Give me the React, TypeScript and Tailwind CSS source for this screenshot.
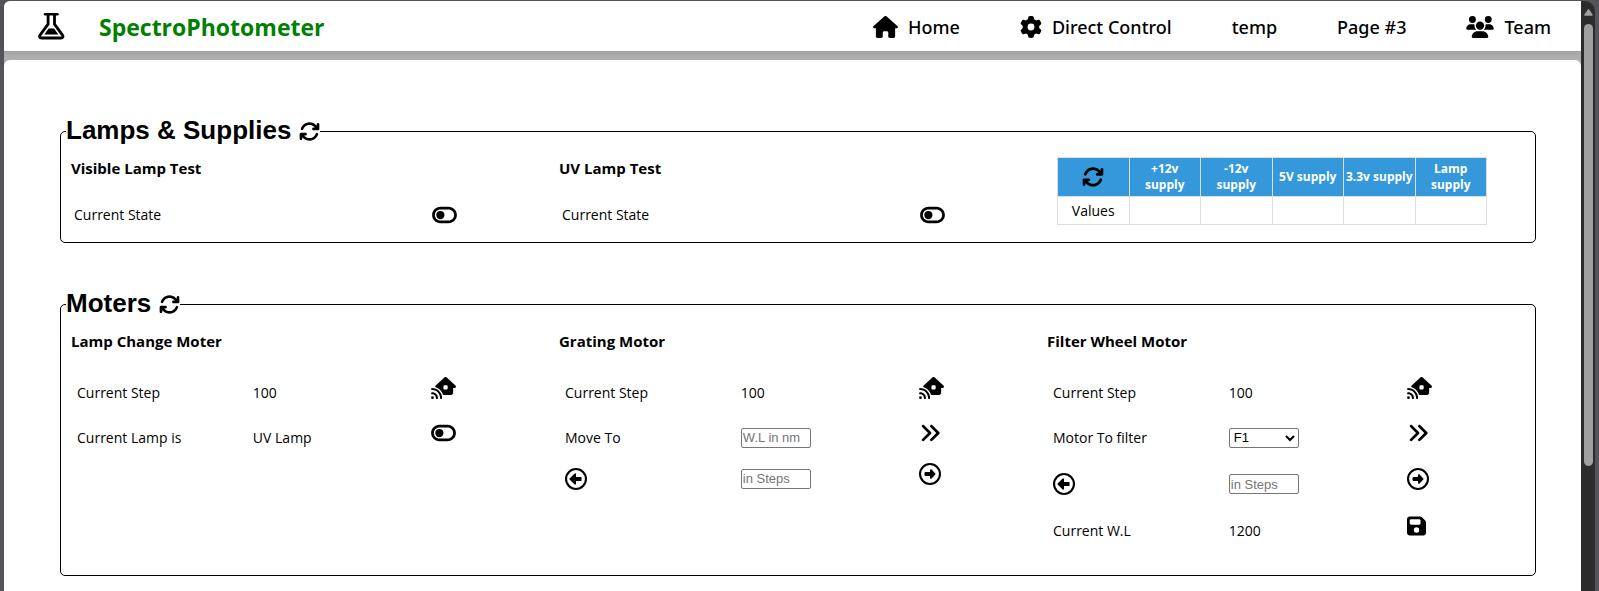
import type { ReactNode } from "react";
import {
  FaAnglesRight,
  FaArrowsRotate,
  FaFloppyDisk,
  FaGear,
  FaHouse,
  FaHouseSignal,
  FaRegCircleLeft,
  FaRegCircleRight,
  FaToggleOff,
  FaUsers,
} from "react-icons/fa6";

const squareIcon = "h-[22px] w-[22px]";
const wideIcon = "h-[22px] w-[25px]";

function FlaskLogo() {
  return (
    <svg viewBox="0 0 27 27" className="h-[27px] w-[27px]" aria-hidden="true">
      <path d="M7 1.300h12.500" stroke="#000" strokeWidth="2.400" strokeLinecap="round" fill="none" />
      <path
        d="M10.100 2v9.200L2.200 21.800c-1.300 1.900-.6 3.200 1.300 3.200h19.500c1.900 0 2.600-1.300 1.300-3.200L16.500 11.200V2"
        stroke="#000"
        strokeWidth="2.800"
        strokeLinejoin="round"
        fill="none"
      />
      <path d="M10.600 15.600h5.400l4.300 5.900H6.300z" fill="#000" />
    </svg>
  );
}

function NavLink({ icon, children }: { icon?: ReactNode; children: ReactNode }) {
  return (
    <a href="#" className="flex items-center gap-2.5 font-['Noto_Sans',sans-serif] text-lg font-medium whitespace-nowrap">
      {icon}
      <span>{children}</span>
    </a>
  );
}

function IconButton({ label, children }: { label: string; children: ReactNode }) {
  return (
    <button type="button" aria-label={label} className="block">
      {children}
    </button>
  );
}

function Panel({ title, children }: { title: string; children: ReactNode }) {
  return (
    <fieldset className="rounded-[5px] border border-black px-[5px]">
      <legend className="flex h-[30px] items-center gap-2 font-['Liberation_Sans',sans-serif] text-[26px] font-bold">
        {title}
        <button type="button" aria-label={`Refresh ${title}`} className="text-[21px]">
          <FaArrowsRotate />
        </button>
      </legend>
      <div className="grid grid-cols-3 items-start">{children}</div>
    </fieldset>
  );
}

function Heading({ children }: { children: ReactNode }) {
  return <h2 className="mt-2.5 text-[15px] leading-6 font-bold">{children}</h2>;
}

function LampTest({ title }: { title: string }) {
  return (
    <section className="px-[5px] pb-[11px]">
      <Heading>{title}</Heading>
      <div className="mt-[19px] grid h-8 grid-cols-[75%_1fr] items-center">
        <span className="pl-[3px]">Current State</span>
        <div className="pl-0.5">
          <IconButton label={`Toggle ${title}`}>
            <FaToggleOff className={wideIcon} />
          </IconButton>
        </div>
      </div>
    </section>
  );
}

function SupplyTable() {
  const cell = "border border-[#ddd] px-0.5";
  return (
    <table className="mt-[11px] ml-[15px] w-[430px] table-fixed border-collapse text-center">
      <thead>
        <tr className="h-[39px] bg-[#3498db] text-xs leading-4 font-bold text-white">
          <th className={cell}>
            <button type="button" aria-label="Refresh supplies" className="mx-auto block text-[22px] text-black">
              <FaArrowsRotate />
            </button>
          </th>
          <th className={cell}>+12v supply</th>
          <th className={cell}>-12v supply</th>
          <th className={cell}>5V supply</th>
          <th className="border border-[#ddd] whitespace-nowrap">3.3v supply</th>
          <th className={cell}>Lamp supply</th>
        </tr>
      </thead>
      <tbody>
        <tr className="h-7">
          <td className={cell}>Values</td>
          <td className={cell} />
          <td className={cell} />
          <td className={cell} />
          <td className={cell} />
          <td className={cell} />
        </tr>
      </tbody>
    </table>
  );
}

function MotorRow({
  label,
  value,
  action,
  height = "h-[45px]",
}: {
  label: ReactNode;
  value: ReactNode;
  action: ReactNode;
  height?: string;
}) {
  return (
    <div className={`grid grid-cols-[37%_38%_1fr] items-center ${height}`}>
      <div className="pl-1.5">{label}</div>
      <div className="pl-[5px]">{value}</div>
      <div className="pb-2.5 pl-0.5">{action}</div>
    </div>
  );
}

function Motor({ title, children }: { title: string; children: ReactNode }) {
  return (
    <section className="px-[5px] pb-[22px]">
      <Heading>{title}</Heading>
      <div className="mt-[17px]">{children}</div>
    </section>
  );
}

const field =
  "block h-5 w-[70px] rounded-[2px] border border-[#767676] bg-white font-['Liberation_Sans',sans-serif] text-[13px] leading-4";

function StepsRow({ name, height }: { name: string; height: string }) {
  return (
    <MotorRow
      height={height}
      label={
        <IconButton label={`${name} back`}>
          <FaRegCircleLeft className={squareIcon} />
        </IconButton>
      }
      value={<input aria-label={`${name} steps`} placeholder="in Steps" className={`${field} px-px placeholder:text-[#757575]`} />}
      action={
        <IconButton label={`${name} forward`}>
          <FaRegCircleRight className={squareIcon} />
        </IconButton>
      }
    />
  );
}

function HomeButton() {
  return (
    <IconButton label="Move home">
      <FaHouseSignal className={wideIcon} />
    </IconButton>
  );
}

function GoButton() {
  return (
    <IconButton label="Go">
      <FaAnglesRight className={squareIcon} />
    </IconButton>
  );
}

export default function App() {
  return (
    <div className="flex h-screen overflow-hidden bg-[#54555a] pt-px pr-1 pl-1 font-['Open_Sans','Noto_Sans',sans-serif] text-sm text-black">
      <div className="flex min-w-0 flex-1 flex-col rounded-tl-[6px] bg-[#b0b0b0]">
        <header className="flex h-[50px] shrink-0 items-center rounded-tl-[6px] bg-white pr-[30px] pl-[34px] shadow-[0_2px_6px_rgba(0,0,0,0.12)]">
          <FlaskLogo />
          <h1 className="ml-[34px] pt-0.5 text-[23px] font-bold text-[#008000]">SpectroPhotometer</h1>
          <nav className="ml-auto flex items-center gap-[60px] pt-0.5">
            <NavLink icon={<FaHouse className={wideIcon} />}>Home</NavLink>
            <NavLink icon={<FaGear className={squareIcon} />}>Direct Control</NavLink>
            <NavLink>temp</NavLink>
            <NavLink>Page #3</NavLink>
            <NavLink icon={<FaUsers className="h-[22px] w-7" />}>Team</NavLink>
          </nav>
        </header>
        <main className="mt-[9px] flex flex-1 flex-col gap-[46px] rounded-t-[6px] bg-white px-[45px] pt-14 pl-14">
          <Panel title="Lamps & Supplies">
            <LampTest title="Visible Lamp Test" />
            <LampTest title="UV Lamp Test" />
            <SupplyTable />
          </Panel>
          <Panel title="Moters">
            <Motor title="Lamp Change Moter">
              <MotorRow label="Current Step" value="100" action={<HomeButton />} />
              <MotorRow
                label="Current Lamp is"
                value="UV Lamp"
                action={
                  <IconButton label="Switch lamp">
                    <FaToggleOff className={wideIcon} />
                  </IconButton>
                }
              />
            </Motor>
            <Motor title="Grating Motor">
              <MotorRow label="Current Step" value="100" action={<HomeButton />} />
              <MotorRow
                label={<label htmlFor="wavelength">Move To</label>}
                value={<input id="wavelength" placeholder="W.L in nm" className={`${field} px-px placeholder:text-[#757575]`} />}
                action={<GoButton />}
              />
              <StepsRow name="Grating" height="h-[37px]" />
            </Motor>
            <Motor title="Filter Wheel Motor">
              <MotorRow label="Current Step" value="100" action={<HomeButton />} />
              <MotorRow
                label={<label htmlFor="filter">Motor To filter</label>}
                value={
                  <select id="filter" className={field}>
                    <option>F1</option>
                    <option>F2</option>
                    <option>F3</option>
                  </select>
                }
                action={<GoButton />}
              />
              <StepsRow name="Filter" height="h-12" />
              <MotorRow
                label="Current W.L"
                value="1200"
                action={
                  <IconButton label="Save">
                    <FaFloppyDisk className="h-[22px] w-[19px]" />
                  </IconButton>
                }
              />
            </Motor>
          </Panel>
        </main>
      </div>
      <div className="flex w-[14px] shrink-0 flex-col items-center rounded-tr-[10px] bg-[#2c2c2c] pt-2">
        <svg viewBox="0 0 9 7" className="h-[7px] w-[9px]" aria-hidden="true">
          <path d="M4.500 0.800L8 6H1z" fill="#9f9f9f" stroke="#9f9f9f" strokeWidth="1.500" strokeLinejoin="round" />
        </svg>
        <div className="mt-2 h-[76%] w-[9px] rounded-full bg-[#9f9f9f]" />
      </div>
    </div>
  );
}
